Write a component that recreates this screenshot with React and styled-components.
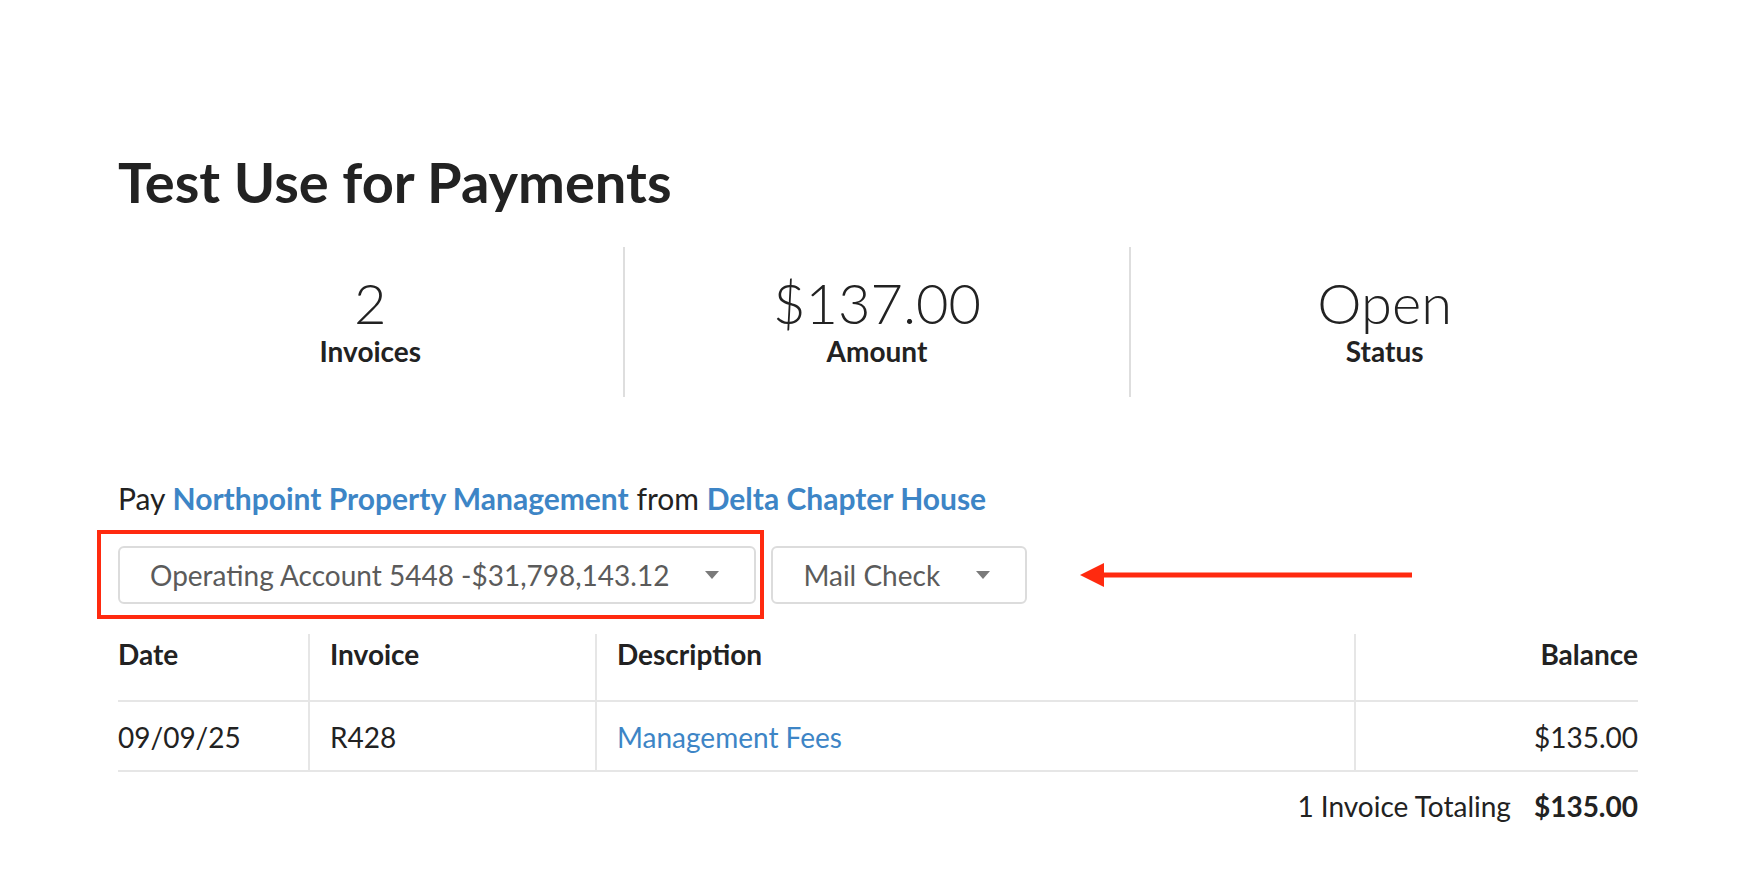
import React from "react"
import styled, { createGlobalStyle } from "styled-components"

const GlobalStyle = createGlobalStyle`
  body {
    margin: 0;
    background: #fff;
    font-family: Lato, "Open Sans", sans-serif;
    color: #222;
  }
`

const stats = [
  { value: "2", label: "Invoices" },
  { value: "$137.00", label: "Amount" },
  { value: "Open", label: "Status" },
]

const invoices = [
  { date: "09/09/25", number: "R428", description: "Management Fees", balance: "$135.00" },
]

const CaretDown = () => (
  <svg width="14" height="8" viewBox="0 0 14 8">
    <path d="M0 0h14L7 8z" fill="#7a7a7a" />
  </svg>
)

const Arrow = () => (
  <ArrowSvg width="332" height="26" viewBox="0 0 332 26">
    <path d="M22 10.5h310v5H22z" fill="#ff2a0f" />
    <path d="M0 13L24 1v24z" fill="#ff2a0f" />
  </ArrowSvg>
)

const App = () => {
  return (
    <Page>
      <GlobalStyle />
      <Title>Test Use for Payments</Title>

      <StatRow>
        {stats.map((s) => (
          <Stat key={s.label}>
            <StatValue>{s.value}</StatValue>
            <StatLabel>{s.label}</StatLabel>
          </Stat>
        ))}
      </StatRow>

      <PayLine>
        Pay <LinkText>Northpoint Property Management</LinkText> from{" "}
        <LinkText>Delta Chapter House</LinkText>
      </PayLine>

      <SelectRow>
        <Highlight />
        <Select>
          <span>Operating Account 5448 -$31,798,143.12</span>
          <CaretDown />
        </Select>
        <Select>
          <span>Mail Check</span>
          <CaretDown />
        </Select>
        <Arrow />
      </SelectRow>

      <Table>
        <HeadCell $first>Date</HeadCell>
        <HeadCell>Invoice</HeadCell>
        <HeadCell>Description</HeadCell>
        <HeadCell $right>Balance</HeadCell>
        {invoices.map((inv) => (
          <React.Fragment key={inv.number}>
            <Cell $first>{inv.date}</Cell>
            <Cell>{inv.number}</Cell>
            <Cell>
              <DescLink>{inv.description}</DescLink>
            </Cell>
            <Cell $right>{inv.balance}</Cell>
          </React.Fragment>
        ))}
      </Table>

      <Totals>
        <span>1 Invoice Totaling</span>
        <strong>$135.00</strong>
      </Totals>
    </Page>
  )
}

const Page = styled.main`
  width: 1520px;
  padding: 148px 0 60px 118px;
`

const Title = styled.h1`
  margin: 0;
  font-size: 56px;
  line-height: 1.2;
  font-weight: 700;
  color: #222;
`

const StatRow = styled.section`
  display: grid;
  grid-template-columns: repeat(3, 1fr);
  margin-top: 32px;
`

const Stat = styled.div`
  display: flex;
  flex-direction: column;
  align-items: center;
  height: 150px;
  padding-top: 22px;
  box-sizing: border-box;

  &:not(:last-child) {
    border-right: 2px solid #dedede;
  }
`

const StatValue = styled.div`
  font-size: 56px;
  font-weight: 300;
  line-height: 1.2;
`

const StatLabel = styled.div`
  font-size: 28px;
  font-weight: 700;
  line-height: 1.1;
`

const PayLine = styled.p`
  margin: 83px 0 0;
  font-size: 30px;
  line-height: 1.2;
`

const LinkText = styled.a`
  color: #3d85c6;
  font-weight: 700;
  text-decoration: none;
`

const SelectRow = styled.div`
  position: relative;
  display: flex;
  align-items: center;
  gap: 15px;
  margin-top: 30px;
`

const Highlight = styled.div`
  position: absolute;
  left: -21px;
  top: -16px;
  width: 667px;
  height: 89px;
  box-sizing: border-box;
  border: 4px solid #ff2a0f;
  pointer-events: none;
`

const Select = styled.div`
  display: flex;
  align-items: center;
  gap: 36px;
  height: 58px;
  box-sizing: border-box;
  padding: 0 35px 0 30px;
  border: 2px solid #dcdcdc;
  border-radius: 6px;
  background: #fff;
  font-size: 28px;
  color: #5b5b5b;
`

const ArrowSvg = styled.svg`
  margin-left: 38px;
`

const Table = styled.div`
  display: grid;
  grid-template-columns: 190px 287px 1fr 284px;
  margin-top: 30px;
`

const CellBase = styled.div`
  font-size: 28px;
  line-height: 1.2;
  border-bottom: 2px solid #e6e6e6;
  border-left: ${(p) => (p.$first ? "none" : "2px solid #e6e6e6")};
  text-align: ${(p) => (p.$right ? "right" : "left")};
  padding-left: ${(p) => (p.$first ? "0" : "20px")};
  padding-right: ${(p) => (p.$right ? "0" : "20px")};
`

const HeadCell = styled(CellBase)`
  padding-top: 4px;
  padding-bottom: 28px;
  font-weight: 700;
`

const Cell = styled(CellBase)`
  padding-top: 19px;
  padding-bottom: 16px;
`

const DescLink = styled.a`
  color: #3d85c6;
  text-decoration: none;
`

const Totals = styled.div`
  display: flex;
  justify-content: flex-end;
  gap: 23px;
  margin-top: 18px;
  font-size: 28px;
  line-height: 1.2;

  strong {
    font-weight: 700;
  }
`

export default App
